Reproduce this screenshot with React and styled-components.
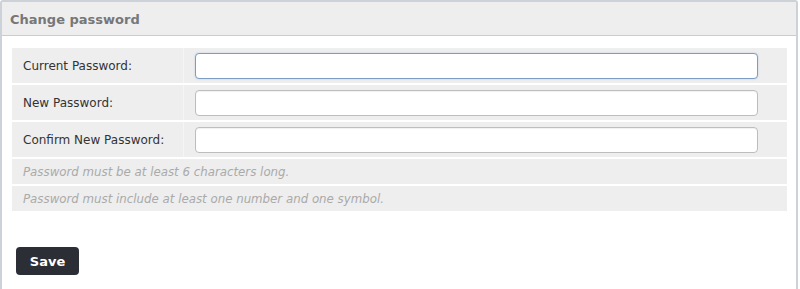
import React from 'react';
import styled, { createGlobalStyle } from 'styled-components';

const GlobalStyle = createGlobalStyle`
  html, body {
    margin: 0;
    padding: 0;
    background: #fff;
  }
  body {
    font-family: "DejaVu Sans", Verdana, sans-serif;
  }
`;

const fields = [
  { label: 'Current Password:', focused: true },
  { label: 'New Password:' },
  { label: 'Confirm New Password:' },
];

const hints = [
  'Password must be at least 6 characters long.',
  'Password must include at least one number and one symbol.',
];

const App = () => {
  return (
    <>
      <GlobalStyle />
      <Panel>
        <Header>Change password</Header>
        <Body>
          <Rows>
            {fields.map(f => (
              <FieldRow key={f.label}>
                <Label>{f.label}</Label>
                <InputCell>
                  <Input type="password" focused={f.focused} />
                </InputCell>
              </FieldRow>
            ))}
            {hints.map(h => (
              <Hint key={h}>{h}</Hint>
            ))}
          </Rows>
          <Actions>
            <SaveBtn>Save</SaveBtn>
          </Actions>
        </Body>
      </Panel>
    </>
  );
};

const Panel = styled.div`
  width: 794px;
  height: 300px;
  border: 2px solid #cdd1d8;
  border-bottom: none;
  border-radius: 3px 3px 0 0;
  background: #fff;
`;
const Header = styled.div`
  display: flex;
  align-items: center;
  height: 34px;
  padding: 1px 0 0 8px;
  box-sizing: border-box;
  background: #eeeeee;
  border-bottom: 1px solid #cccccc;
  color: #777;
  font-size: 13px;
  font-weight: bold;
`;
const Body = styled.div`
  padding: 12px 9px 0 10px;
`;
const Rows = styled.div`
  display: flex;
  flex-direction: column;
  gap: 2px;
`;
const FieldRow = styled.div`
  display: grid;
  grid-template-columns: 172px 1fr;
  height: 35px;
  background: #eeeeee;
`;
const Label = styled.div`
  display: flex;
  align-items: center;
  padding-left: 11px;
  border-right: 1px solid #f5f5f5;
  color: #333;
  font-size: 12px;
`;
const InputCell = styled.div`
  display: flex;
  align-items: center;
  padding: 0 29px 0 11px;
`;
const Input = styled.input`
  box-sizing: border-box;
  width: 100%;
  height: 26px;
  border: 1px solid ${props => (props.focused ? '#7c9cc4' : '#bdbdbd')};
  border-radius: 4px;
  background: #fff;
  outline: none;
  box-shadow: ${props =>
    props.focused ? '0 0 2px rgba(100, 140, 190, 0.35)' : 'inset 0 1px 1px rgba(0,0,0,0.06)'};
`;
const Hint = styled.div`
  display: flex;
  align-items: center;
  height: 25px;
  padding-left: 11px;
  background: #eeeeee;
  color: #aaa;
  font-size: 11.8px;
  font-style: italic;
`;
const Actions = styled.div`
  display: flex;
  padding: 36px 0 0 4px;
`;
const SaveBtn = styled.button`
  width: 63px;
  height: 28px;
  border: none;
  border-radius: 4px;
  background: #2b2e35;
  color: #fff;
  font-family: "DejaVu Sans", Verdana, sans-serif;
  font-size: 13px;
  font-weight: bold;
  cursor: pointer;
`;

export default App;
